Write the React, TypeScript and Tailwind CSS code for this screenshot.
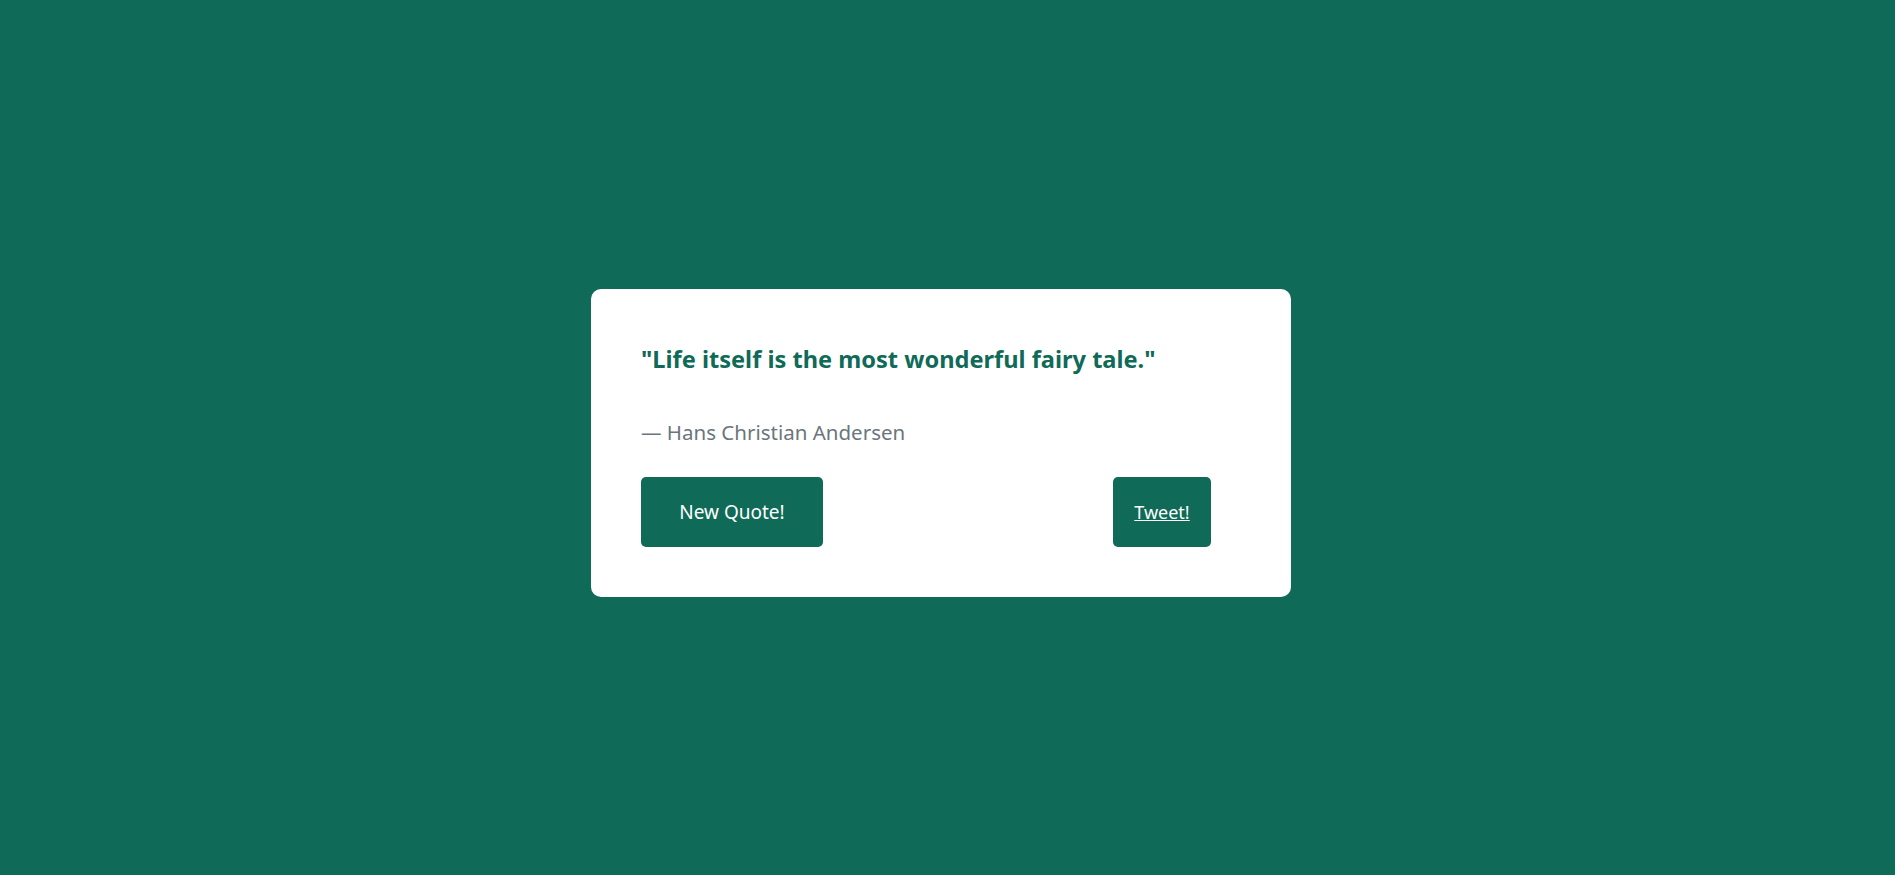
import React from "react";

const App = () => {
  return (
    <div className="min-h-[875px] w-full bg-[#0f6a58] flex items-center justify-center pt-[11px] pr-[13px]" style={{ fontFamily: '"Noto Sans", "Open Sans", sans-serif' }}>
      <div className="w-[700px] h-[308px] bg-white rounded-[10px] px-[50px] pt-[52px]">
        <p className="text-[23.6px] leading-[36px] font-bold text-[#0f6a58]">
          "Life itself is the most wonderful fairy tale."
        </p>
        <p className="mt-[40px] text-[20.5px] leading-[30px] text-[#6c757d]">
          — Hans Christian Andersen
        </p>
        <div className="mt-[30px] flex items-center justify-between pr-[30px]">
          <button className="w-[182px] h-[70px] bg-[#0f6a58] rounded-[5px] text-white text-[19px]">
            New Quote!
          </button>
          <a href="#" className="w-[98px] h-[70px] bg-[#0f6a58] rounded-[5px] text-white text-[18px] underline flex items-center justify-center">
            Tweet!
          </a>
        </div>
      </div>
    </div>
  );
};

export default App;
